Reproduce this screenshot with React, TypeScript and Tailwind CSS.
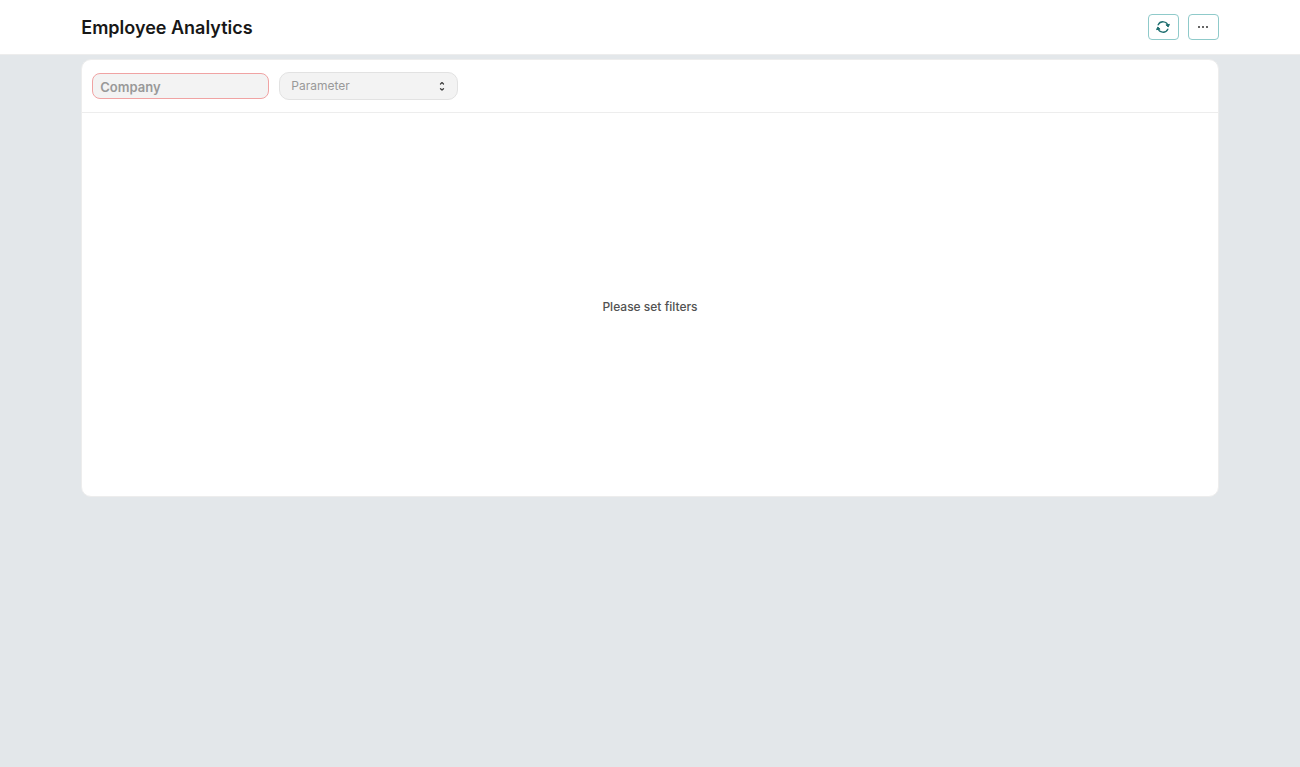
import { useState } from "react";

const parameters = ["Branch", "Grade", "Department", "Designation", "Employment Type"];

export default function App() {
  const [company, setCompany] = useState("");
  const [parameter, setParameter] = useState("");

  return (
    <div className="min-h-screen bg-[#e3e7ea] font-[Inter,sans-serif] text-[13px] text-[#525252]">
      <header className="border-b border-[#ededed] bg-white">
        <div className="mx-auto flex h-[54px] w-7/8 items-center justify-between">
          <h1 className="pt-0.5 text-lg font-semibold text-[#171717]">Employee Analytics</h1>
          <div className="flex gap-[9px]">
            <IconButton label="Refresh">
              <RefreshIcon />
            </IconButton>
            <IconButton label="Menu">
              <DotsIcon />
            </IconButton>
          </div>
        </div>
      </header>

      <main className="mx-auto mt-1 w-7/8 rounded-[10px] border border-[#ededed] bg-white">
        <form className="flex items-center gap-2.5 border-b border-[#ededed] px-2.5 py-3">
          <input
            type="text"
            aria-label="Company"
            placeholder="Company"
            value={company}
            onChange={(e) => setCompany(e.target.value)}
            className="h-[26px] w-[177px] rounded-lg border border-[#f0a3a3] bg-[#f3f3f3] px-[7px] pt-0.5 font-semibold text-[#383838] outline-none placeholder:text-[#999999]"
          />
          <div className="relative">
            <select
              aria-label="Parameter"
              value={parameter}
              onChange={(e) => setParameter(e.target.value)}
              className={`block h-7 w-[179px] appearance-none rounded-[10px] border border-[#e2e2e2] bg-[#f3f3f3] pr-7 pl-[11px] text-xs outline-none ${parameter ? "text-[#383838]" : "text-[#999999]"}`}
            >
              <option value="" disabled>
                Parameter
              </option>
              {parameters.map((p) => (
                <option key={p} value={p}>
                  {p}
                </option>
              ))}
            </select>
            <SelectIcon />
          </div>
        </form>

        <div className="flex h-[383px] items-center justify-center pt-1">
          <p className="text-xs font-medium">Please set filters</p>
        </div>
      </main>
    </div>
  );
}

function IconButton({ label, children }: { label: string; children: React.ReactNode }) {
  return (
    <button
      type="button"
      aria-label={label}
      className="flex h-[26px] w-[31px] items-center justify-center rounded-[4px] border border-[#8fcaca] bg-white hover:bg-[#f3fafa]"
    >
      {children}
    </button>
  );
}

function RefreshIcon() {
  return (
    <svg width="14" height="14" viewBox="0 0 14 14" fill="none" stroke="#1f6f70" strokeWidth="1.4" strokeLinecap="round" strokeLinejoin="round">
      <path d="M2.2 4.8A5.3 5.3 0 0 1 12.1 5.8" />
      <path d="M11.8 9.2A5.3 5.3 0 0 1 1.9 8.2" />
      <path d="M10.2 5.1 12.2 6.9 13.3 4.7Z" fill="#1f6f70" strokeWidth="1" />
      <path d="M3.8 8.9 1.8 7.1.7 9.3Z" fill="#1f6f70" strokeWidth="1" />
    </svg>
  );
}

function DotsIcon() {
  return (
    <svg width="12" height="12" viewBox="0 0 12 12" fill="#333333">
      <circle cx="2" cy="6" r="1" />
      <circle cx="6" cy="6" r="1" />
      <circle cx="10" cy="6" r="1" />
    </svg>
  );
}

function SelectIcon() {
  return (
    <svg className="pointer-events-none absolute top-2 right-2.5" width="12" height="12" viewBox="0 0 12 12" fill="none" stroke="#404040" strokeWidth="1.3" strokeLinecap="round" strokeLinejoin="round">
      <path d="M4.5 4 6 2.6 7.5 4" />
      <path d="M4.5 8.7 6 10.1 7.5 8.7" />
    </svg>
  );
}
